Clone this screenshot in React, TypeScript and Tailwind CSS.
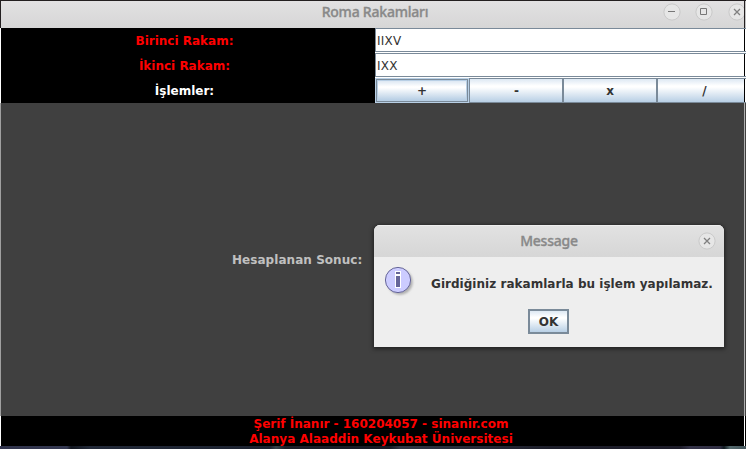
import type { ReactNode } from "react";

const swing = "font-['DejaVu_Sans',sans-serif] text-[12px] leading-[14px]";
const metal = "bg-[linear-gradient(180deg,#dde8f3_0%,#ffffff_30%,#ffffff_35%,#b8cfe5_100%)]";
const titleFont =
  "font-['Noto_Sans',sans-serif] text-[14px] font-medium leading-5 tracking-[-0.22px] text-[#898989] [-webkit-text-stroke:0.35px_#898989]";

function Caption({ className, children }: { className: string; children: ReactNode }) {
  return (
    <div className={`flex h-[25px] items-center justify-center pr-[7px] font-bold ${swing} ${className}`}>
      {children}
    </div>
  );
}

function Field({ value }: { value: string }) {
  return (
    <div className="h-[25px] bg-white">
      <div className="flex h-6 border-y border-[#7a8a99]">
        <div className={`flex flex-1 items-center border-l border-[#7a8a99] pl-px pt-px tracking-[0.2px] text-[#333333] ${swing}`}>
          {value}
        </div>
        <div className="w-px bg-black" />
        <div className="w-px bg-white" />
      </div>
    </div>
  );
}

function WindowButton({ kind }: { kind: "min" | "max" | "close" }) {
  return (
    <svg className="block h-[18px] w-[18px] shrink-0" viewBox="0 0 18 18" fill="none">
      <circle cx="9" cy="9" r="8.1" fill="#e6e6e6" stroke="#c9c9c9" strokeWidth="1" />
      {kind === "min" && <path d="M5 8.5h7" stroke="#777777" />}
      {kind === "max" && <path d="M5.5 5.5h6v6h-6z" stroke="#777777" />}
      {kind === "close" && <path d="M6 6l6 6M12 6l-6 6" stroke="#808080" strokeWidth="1.3" />}
    </svg>
  );
}

function OperationButton({ label, className }: { label: string; className: string }) {
  return (
    <div className={`flex h-[25px] items-center justify-center border border-[#7a8a99] font-bold text-[#333333] ${swing} ${metal} ${className}`}>
      {label}
    </div>
  );
}

function FocusedButton({ label }: { label: string }) {
  return (
    <div className="h-[25px] w-[94px] bg-[#b8cfe5] p-px">
      <div className="h-[23px] border border-[#7a8a99] bg-[#b8cfe5] p-px">
        <div className={`flex h-[19px] items-center justify-center font-bold text-[#333333] ${swing} ${metal}`}>{label}</div>
      </div>
    </div>
  );
}

function MessageDialog() {
  return (
    <div className="absolute left-[374px] top-[225px] h-[122px] w-[350px] overflow-hidden rounded-t-[6px] bg-[#eeeeee] shadow-[0_1px_4px_1px_rgba(0,0,0,0.5)]">
      <div className="flex h-8 items-center justify-between bg-[linear-gradient(180deg,#e2e2e2,#d6d6d6)] pl-[26px] pr-2 shadow-[inset_0_1px_0_#eeeeee]">
        <div className={`flex-1 text-center ${titleFont}`}>Message</div>
        <WindowButton kind="close" />
      </div>
      <div className="flex h-[43px] pl-[10px]">
        <svg className="mt-[9px] h-8 w-8 shrink-0" viewBox="0 0 32 32">
          <defs>
            <filter id="soft" x="-20%" y="-20%" width="150%" height="150%">
              <feGaussianBlur stdDeviation="1.3" />
            </filter>
          </defs>
          <circle cx="16" cy="16" r="12.7" fill="#b0b0b0" filter="url(#soft)" />
          <circle cx="14" cy="14" r="12.6" fill="#ccccff" stroke="#666699" />
          <path d="M11 5h6v17h-6z" fill="#ffffff" />
          <path d="M12 6h4v2h-4zM12 10h4v11h-4z" fill="#666699" />
        </svg>
        <div className={`ml-[15px] mt-5 whitespace-nowrap font-bold tracking-[0.03px] text-[#333333] ${swing}`}>
          Girdiğiniz rakamlarla bu işlem yapılamaz.
        </div>
      </div>
      <div className={`ml-[154px] mt-[9px] flex h-[25px] w-[41px] items-center justify-center border-2 border-[#7a8a99] font-bold text-[#333333] ${swing} ${metal}`}>
        OK
      </div>
    </div>
  );
}

export default function App() {
  return (
    <div className="relative flex h-[449px] w-[746px] flex-col overflow-hidden bg-[#404040]">
      <div className="h-px bg-[#231f20]" />
      <div className="flex h-[27px] border-l border-[#231f20]">
        <div className="flex w-[743px] items-center overflow-hidden bg-[linear-gradient(180deg,#e2e1e2,#d6d6d6)]">
          <div className={`w-[662px] shrink-0 pb-[5px] pl-[86px] text-center ${titleFont}`}>Roma Rakamları</div>
          <div className="flex gap-[14px] pb-[5px]">
            <WindowButton kind="min" />
            <WindowButton kind="max" />
            <div className="pl-px">
              <WindowButton kind="close" />
            </div>
          </div>
        </div>
        <div className="w-px bg-[#231f20]" />
        <div className="w-px bg-[#c4c4c4]" />
      </div>
      <div className="flex h-[75px] border-l border-white">
        <div className="w-[374px] bg-black">
          <Caption className="text-[#ff0000]">Birinci Rakam:</Caption>
          <Caption className="text-[#ff0000]">İkinci Rakam:</Caption>
          <Caption className="text-white">İşlemler:</Caption>
        </div>
        <div className="w-[371px]">
          <Field value="IIXV" />
          <Field value="IXX" />
          <div className="flex">
            <FocusedButton label="+" />
            <OperationButton label="-" className="w-[94px] pl-px" />
            <OperationButton label="x" className="w-[94px]" />
            <OperationButton label="/" className="w-[87px] border-r-0 pl-[7px]" />
            <div className="flex w-[2px] border-y border-[#7a8a99]">
              <div className="w-px bg-black" />
              <div className="w-px bg-white" />
            </div>
          </div>
        </div>
      </div>
      <div className="flex h-[313px] border-l border-[#a0a0a0]">
        <div className={`flex w-[743px] items-center pl-[231px] font-bold tracking-[0.05px] text-[#c0c0c0] ${swing}`}>
          Hesaplanan Sonuc:
        </div>
        <div className="w-px bg-[#b0b0b0]" />
        <div className="w-px bg-[#404040]" />
      </div>
      <div className="flex h-[30px] border-l border-white bg-black">
        <div className={`w-[743px] pl-[17px] pt-px text-center font-bold text-[#ff0000] ${swing}`}>
          <div className="h-[15px] leading-[15px]">Şerif İnanır - 160204057 - sinanir.com</div>
          <div className="h-[15px] leading-[15px] tracking-[0.03px]">Alanya Alaaddin Keykubat Üniversitesi</div>
        </div>
        <div className="w-px bg-white" />
      </div>
      <div className="h-[3px] bg-[linear-gradient(90deg,#30334b_0px,#343851_67px,#11151e_71px,#222938_90px,#1c2230_270px,#35424a_276px,#1c202a_285px,#171a24_390px,#303644_400px,#1d1e2a_550px,#1d1c29_680px,#343348_690px,#302e43_720px,#101a20_724px,#54696d_730px,#46575d_746px)]" />
      <MessageDialog />
    </div>
  );
}
